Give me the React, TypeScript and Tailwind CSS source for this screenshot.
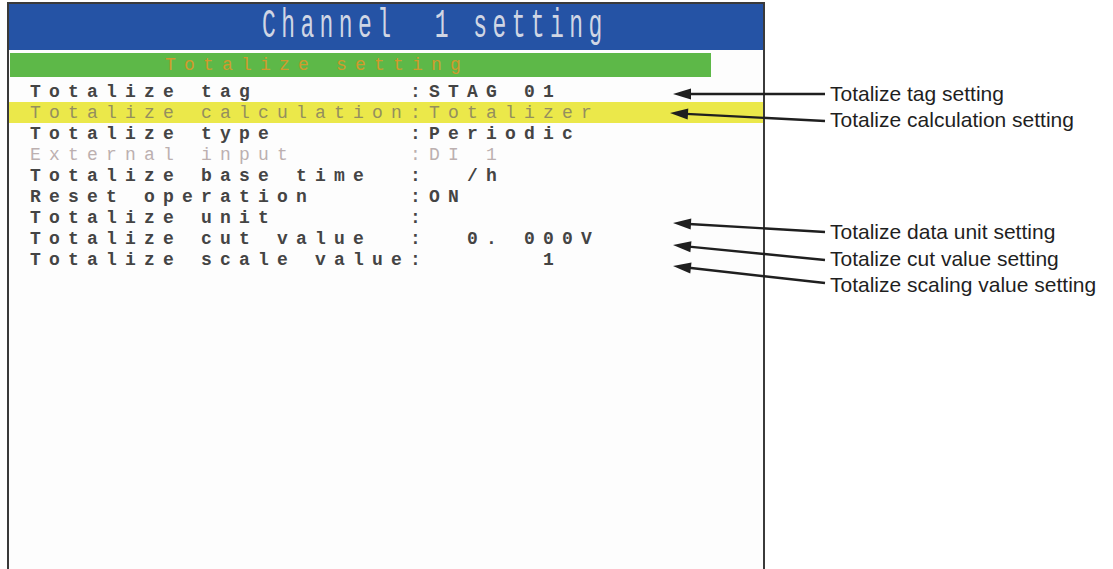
import React from 'react'

type Row = { text: string; tone?: 'dim' | 'hl' }

const rows: Row[] = [
  { text: 'Totalize tag        :STAG 01' },
  { text: 'Totalize calculation:Totalizer', tone: 'hl' },
  { text: 'Totalize type       :Periodic' },
  { text: 'External input      :DI 1', tone: 'dim' },
  { text: 'Totalize base time  :  /h' },
  { text: 'Reset operation     :ON' },
  { text: 'Totalize unit       :' },
  { text: 'Totalize cut value  :  0. 000V' },
  { text: 'Totalize scale value:      1' },
]

const callouts = [
  { label: 'Totalize tag setting', from: [825, 94], tip: [673, 94] },
  { label: 'Totalize calculation setting', from: [825, 121], tip: [670, 113] },
  { label: 'Totalize data unit setting', from: [825, 232], tip: [673, 223] },
  { label: 'Totalize cut value setting', from: [825, 260], tip: [673, 245] },
  { label: 'Totalize scaling value setting', from: [825, 283], tip: [673, 266] },
]

const Arrow = ({ from, tip }: { from: number[]; tip: number[] }) => {
  const dx = from[0] - tip[0]
  const dy = from[1] - tip[1]
  const len = Math.hypot(dx, dy)
  const ux = dx / len
  const uy = dy / len
  // base of the head, 18px back from the tip
  const bx = tip[0] + ux * 18
  const by = tip[1] + uy * 18
  const head = [
    `${tip[0]},${tip[1]}`,
    `${bx - uy * 5.5},${by + ux * 5.5}`,
    `${bx + uy * 5.5},${by - ux * 5.5}`,
  ].join(' ')
  return (
    <g>
      <line x1={from[0]} y1={from[1]} x2={bx - ux * 2} y2={by - uy * 2} stroke="#1f1f1f" strokeWidth="2.4" />
      <polygon points={head} fill="#1f1f1f" />
    </g>
  )
}

const ScreenRow = ({ row }: { row: Row }) => {
  const tone =
    row.tone === 'dim'
      ? 'text-[#bcb0b0] font-normal'
      : row.tone === 'hl'
        ? 'bg-[#ebe84a] text-[#948f5e] font-normal'
        : 'text-[#444] font-bold'
  return (
    <div className={`h-[21px] pl-[21px] flex items-center whitespace-pre ${tone}`}>
      {row.text}
    </div>
  )
}

export default function App() {
  return (
    <div className="relative w-[1113px] h-[569px] bg-white overflow-hidden flex">
      <div className="ml-[7px] mt-[2px] w-[758px] h-[567px] border-x-2 border-t-2 border-[#3a3a3a] bg-[#fdfdfd] flex flex-col">
        <div className="h-[46px] bg-[#2553a5] flex items-center pl-[253px]">
          <span className="inline-block scale-y-[1.75] font-['Liberation_Mono',monospace] text-[23px] tracking-[5.4px] text-[#d0d6e4] whitespace-pre leading-none">
            Channel  1 setting
          </span>
        </div>
        <div className="mt-[3px] ml-[1px] w-[701px] h-[24px] bg-[#5db848] flex items-center pl-[155px] font-['Liberation_Mono',monospace] text-[18px] tracking-[8.2px] text-[#d09a2c]">
          Totalize setting
        </div>
        <div className="mt-[4px] flex flex-col font-['Liberation_Mono',monospace] text-[18px] tracking-[8.2px] leading-none">
          {rows.map((r) => (
            <ScreenRow key={r.text} row={r} />
          ))}
        </div>
      </div>

      <div className="ml-[65px] pt-[81px] flex flex-col font-['Liberation_Sans',Arial,sans-serif] text-[21px] leading-[26px] text-[#1f1f1f] whitespace-nowrap">
        <div>{callouts[0].label}</div>
        <div>{callouts[1].label}</div>
        <div className="mt-[86px]">{callouts[2].label}</div>
        <div className="mt-[1px]">{callouts[3].label}</div>
        <div>{callouts[4].label}</div>
      </div>

      <svg className="absolute inset-0 pointer-events-none" width="1113" height="569">
        {callouts.map((c) => (
          <Arrow key={c.label} from={c.from} tip={c.tip} />
        ))}
      </svg>
    </div>
  )
}
